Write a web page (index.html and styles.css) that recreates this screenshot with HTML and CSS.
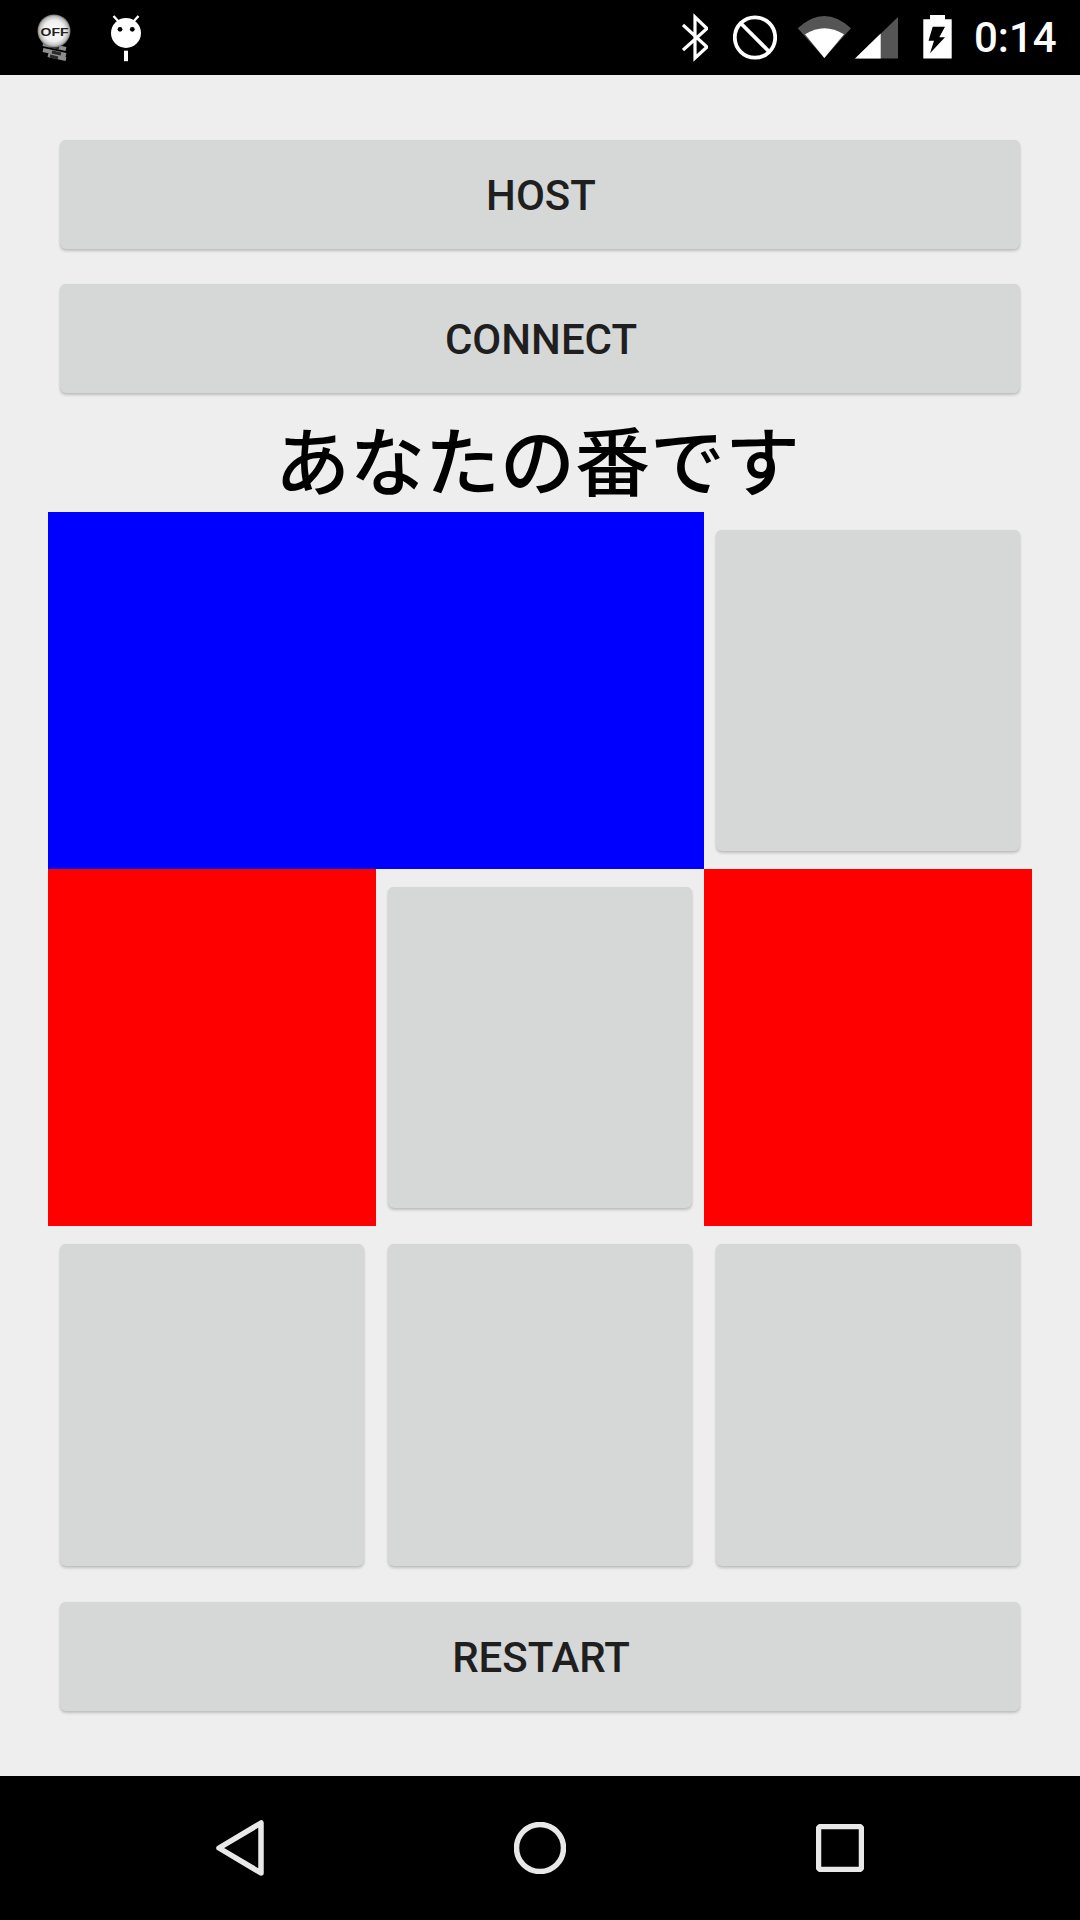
FILE: index.html
```html
<!DOCTYPE html>
<html lang="ja">
<head>
<meta charset="utf-8">
<title>Game</title>
<link rel="stylesheet" href="styles.css">
</head>
<body>
<div class="screen">
  <header class="status">
    <div class="status-left">
      <svg class="ic ic-off" viewBox="36 0 36 75">
        <defs>
          <radialGradient id="bulb" cx="50%" cy="50%" r="50%">
            <stop offset="0" stop-color="#ffffff"/>
            <stop offset="0.65" stop-color="#eeeeee"/>
            <stop offset="0.88" stop-color="#bdbdbd"/>
            <stop offset="1" stop-color="#6f6f6f"/>
          </radialGradient>
        </defs>
        <path d="M43 44 L66 49 M43 50 L66 55 M48 55 L66 59" stroke="#8f8f8f" stroke-width="4" fill="none"/>
        <path d="M50 46 L59 48 M52 52 L61 54 M50 56 L58 58" stroke="#2a2a2a" stroke-width="3" fill="none"/>
        <circle cx="54" cy="31" r="16.5" fill="url(#bulb)"/>
        <text class="off-text" x="54.5" y="36" text-anchor="middle" textLength="28" lengthAdjust="spacingAndGlyphs">OFF</text>
      </svg>
      <svg class="ic ic-droid" viewBox="110 0 32 75">
        <path d="M113.5 16 L118.5 21.5 M138.5 16 L133.5 21.5" stroke="#fff" stroke-width="2.4" fill="none"/>
        <circle cx="126" cy="33" r="15" fill="#fff"/>
        <circle cx="120" cy="29.3" r="2.4" fill="#000"/>
        <circle cx="132.3" cy="29.3" r="2.4" fill="#000"/>
        <rect x="124" y="50.7" width="4" height="10.5" fill="#fff"/>
      </svg>
    </div>
    <div class="status-right">
      <svg class="ic ic-bt" viewBox="22 0 26 75">
        <path d="M23 25 L47 47 L35 58 V17 L47 28.5 L23 50" stroke="#fff" stroke-width="3.2" fill="none"/>
      </svg>
      <svg class="ic ic-block" viewBox="73 0 44 75">
        <circle cx="95" cy="37.5" r="20.2" stroke="#fff" stroke-width="3.8" fill="none"/>
        <path d="M81 23.5 L109 51.5" stroke="#fff" stroke-width="3.8"/>
      </svg>
      <svg class="ic ic-wifi" viewBox="136 0 54 75">
        <path d="M136.7 28.3 Q163.3 3.7 190 28.3 L163.3 58 Z" fill="#555"/>
        <path d="M144 34.3 Q163.3 22.3 183 34.3 L163.3 58 Z" fill="#fff"/>
      </svg>
      <svg class="ic ic-signal" viewBox="195 0 43 75">
        <path d="M195 58.5 L238 17 V58.5 Z" fill="#555"/>
        <path d="M195 58.5 L220.7 33.5 V58.5 Z" fill="#fff"/>
      </svg>
      <svg class="ic ic-battery" viewBox="263 0 29 75">
        <path d="M270 15 H285 V19.3 H291.7 V58.5 H263.3 V19.3 H270 Z" fill="#fff"/>
        <path d="M272.7 26.7 H285 L279.3 37.3 H285 L270 53.3 L274 40.7 H268.5 Z" fill="#000"/>
      </svg>
      <span class="clock">0:14</span>
    </div>
  </header>

  <main class="content">
    <button class="btn btn-wide" type="button">HOST</button>
    <button class="btn btn-wide btn-second" type="button">CONNECT</button>
    <p class="turn">あなたの番です</p>
    <div class="board">
      <div class="cell cell-blue"></div>
      <div class="cell"><button class="btn btn-cell" type="button"></button></div>
      <div class="cell cell-red"></div>
      <div class="cell"><button class="btn btn-cell" type="button"></button></div>
      <div class="cell cell-red"></div>
      <div class="cell"><button class="btn btn-cell" type="button"></button></div>
      <div class="cell"><button class="btn btn-cell" type="button"></button></div>
      <div class="cell"><button class="btn btn-cell" type="button"></button></div>
    </div>
    <button class="btn btn-wide btn-restart" type="button">RESTART</button>
  </main>

  <nav class="navbar">
    <svg class="nav-back" viewBox="0 0 48 56">
      <path d="M3 28 L45 3 V53 Z" stroke="#e8e8e8" stroke-width="5.5" stroke-linejoin="round" fill="none"/>
    </svg>
    <svg class="nav-home" viewBox="0 0 52 52">
      <circle cx="26" cy="26" r="23.5" stroke="#e8e8e8" stroke-width="5.5" fill="none"/>
    </svg>
    <svg class="nav-recent" viewBox="0 0 48 48">
      <rect x="2.5" y="2.5" width="43" height="43" rx="2.5" stroke="#e8e8e8" stroke-width="5.5" fill="none"/>
    </svg>
  </nav>
</div>
</body>
</html>
```

FILE: styles.css
```css
* {
  box-sizing: border-box;
}

html,
body {
  margin: 0;
  padding: 0;
}

body {
  width: 1080px;
  height: 1920px;
  overflow: hidden;
  background: #eeeeee;
  font-family: Roboto, "Noto Sans", sans-serif;
}

.screen {
  display: flex;
  flex-direction: column;
  height: 1920px;
}

/* Status bar */
.status {
  display: flex;
  justify-content: space-between;
  height: 75px;
  padding: 0 25px 0 36px;
  background: #000000;
}

.status-left,
.status-right {
  display: flex;
  align-items: stretch;
}

.ic {
  display: block;
  height: 75px;
}

.ic-off { width: 36px; }
.ic-droid { width: 32px; margin-left: 38px; }
.ic-bt { width: 26px; }
.ic-block { width: 44px; margin-left: 25px; }
.ic-wifi { width: 54px; margin-left: 20px; }
.ic-signal { width: 43px; margin-left: 4px; }
.ic-battery { width: 29px; margin-left: 25px; }

.off-text {
  font-family: "Liberation Sans", sans-serif;
  font-weight: 700;
  font-size: 11.5px;
  fill: #222222;
}

.clock {
  margin-left: 22px;
  align-self: center;
  color: #ffffff;
  font-size: 42px;
  font-weight: 500;
  line-height: 1;
  width: 81px;
  white-space: nowrap;
}

/* Main content */
.content {
  flex: 1;
  display: flex;
  flex-direction: column;
  padding: 65px 48px 0;
}

.btn {
  display: block;
  border: 0;
  padding: 2px 0 0 2px;
  border-radius: 6px;
  background: #d6d7d7;
  box-shadow: 0 2px 3px rgba(0, 0, 0, 0.2), 0 0 1px rgba(0, 0, 0, 0.12);
  color: #1f1f1f;
  font-family: Roboto, sans-serif;
  font-size: 42px;
  font-weight: 500;
  text-transform: uppercase;
}

.btn-wide {
  height: 109px;
  margin: 0 12px;
  flex: none;
}

.btn-second {
  margin-top: 35px;
}

.btn-restart {
  margin-top: 18px;
}

.turn {
  margin: 0;
  height: 119px;
  padding: 20px 5px 0 0;
  flex: none;
  text-align: center;
  color: #000000;
  font-family: "Noto Sans CJK JP", sans-serif;
  font-size: 75px;
  font-weight: 500;
  line-height: 1.2;
  white-space: nowrap;
}

/* Board */
.board {
  display: grid;
  grid-template-columns: repeat(3, 328px);
  grid-template-rows: 357px 357px 358px;
  flex: none;
}

.cell {
  padding: 18px 12px;
}

.cell-blue {
  grid-column: span 2;
  background: #0000ff;
}

.cell-red {
  background: #ff0000;
}

.btn-cell {
  width: 100%;
  height: 100%;
}

/* Navigation bar */
.navbar {
  display: flex;
  justify-content: space-between;
  align-items: center;
  height: 144px;
  padding: 0 216px;
  background: #000000;
  flex: none;
}

.nav-back {
  width: 48px;
  height: 56px;
}

.nav-home {
  width: 52px;
  height: 52px;
}

.nav-recent {
  width: 48px;
  height: 48px;
}
```
